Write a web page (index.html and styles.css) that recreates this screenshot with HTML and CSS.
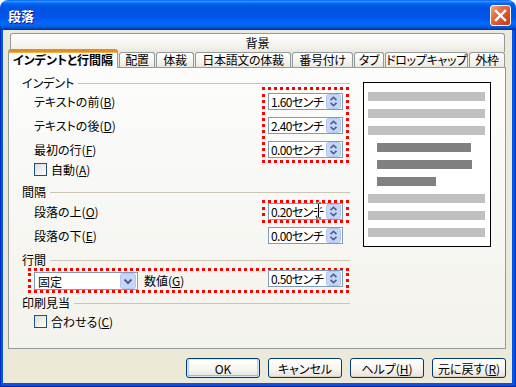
FILE: index.html
```html
<!DOCTYPE html>
<html lang="ja">
<head>
  <meta charset="UTF-8">
  <title>段落</title>
  <link rel="stylesheet" href="styles.css">
</head>
<body>

  <div class="window">
    <div class="titlebar">
      <span class="title">段落</span>
      <span class="close">
        <svg width="19" height="19" viewBox="0 0 19 19"><path d="M5 5 L14 14 M14 5 L5 14" stroke="#fff" stroke-width="2.4" stroke-linecap="square"/></svg>
      </span>
    </div>

    <div class="frame">
      <div class="client">
        <div class="tabs">
          <div class="tab-row back">
            <div class="tab">背景</div>
          </div>
          <div class="tab-row front">
            <div class="tab active">インデントと行間隔</div>
            <div class="tab">配置</div>
            <div class="tab">体裁</div>
            <div class="tab">日本語文の体裁</div>
            <div class="tab">番号付け</div>
            <div class="tab">タブ</div>
            <div class="tab">ドロップキャップ</div>
            <div class="tab">外枠</div>
          </div>
        </div>

        <div class="panel">
          <div class="form">
            <div class="group-title first"><span>インデント</span></div>
            <div class="indent">
              <div class="labels">
                <div class="label">テキストの前(<u>B</u>)</div>
                <div class="label">テキストの後(<u>D</u>)</div>
                <div class="label">最初の行(<u>F</u>)</div>
              </div>
              <div class="mark on stack">
                <div class="spin"><span class="value">1.60センチ</span><svg class="spin-btn" width="15" height="15" viewBox="0 0 15 15"><rect x="0.5" y="0.5" width="14" height="14" rx="2" fill="#C6D5FB" stroke="#B2C6F4"/><path d="M4.5 6.2 L7.5 3.4 L10.5 6.2 M4.5 8.8 L7.5 11.6 L10.5 8.8" fill="none" stroke="#4D6185" stroke-width="1.6"/></svg></div>
                <div class="spin"><span class="value">2.40センチ</span><svg class="spin-btn" width="15" height="15" viewBox="0 0 15 15"><rect x="0.5" y="0.5" width="14" height="14" rx="2" fill="#C6D5FB" stroke="#B2C6F4"/><path d="M4.5 6.2 L7.5 3.4 L10.5 6.2 M4.5 8.8 L7.5 11.6 L10.5 8.8" fill="none" stroke="#4D6185" stroke-width="1.6"/></svg></div>
                <div class="spin"><span class="value">0.00センチ</span><svg class="spin-btn" width="15" height="15" viewBox="0 0 15 15"><rect x="0.5" y="0.5" width="14" height="14" rx="2" fill="#C6D5FB" stroke="#B2C6F4"/><path d="M4.5 6.2 L7.5 3.4 L10.5 6.2 M4.5 8.8 L7.5 11.6 L10.5 8.8" fill="none" stroke="#4D6185" stroke-width="1.6"/></svg></div>
              </div>
            </div>
            <div class="check auto"><span class="box"></span><span>自動(<u>A</u>)</span></div>

            <div class="group-title spacing"><span>間隔</span></div>
            <div class="row above">
              <div class="label">段落の上(<u>O</u>)</div>
              <div class="mark on">
                <div class="spin"><span class="value">0.20センチ</span><svg class="spin-btn" width="15" height="15" viewBox="0 0 15 15"><rect x="0.5" y="0.5" width="14" height="14" rx="2" fill="#C6D5FB" stroke="#B2C6F4"/><path d="M4.5 6.2 L7.5 3.4 L10.5 6.2 M4.5 8.8 L7.5 11.6 L10.5 8.8" fill="none" stroke="#4D6185" stroke-width="1.6"/></svg>
                  <svg class="ibeam" width="7" height="17" viewBox="0 0 7 17"><path d="M0.5 0.5 H6.5 M0.5 16.5 H6.5 M3.5 0.5 V16.5" fill="none" stroke="#fff" stroke-width="2.5"/><path d="M1 1 H3 M4 1 H6 M1 16 H3 M4 16 H6 M3.5 1.5 V15.5" fill="none" stroke="#000" stroke-width="1"/></svg>
                </div>
              </div>
            </div>
            <div class="row below">
              <div class="label">段落の下(<u>E</u>)</div>
              <div class="mark">
                <div class="spin"><span class="value">0.00センチ</span><svg class="spin-btn" width="15" height="15" viewBox="0 0 15 15"><rect x="0.5" y="0.5" width="14" height="14" rx="2" fill="#C6D5FB" stroke="#B2C6F4"/><path d="M4.5 6.2 L7.5 3.4 L10.5 6.2 M4.5 8.8 L7.5 11.6 L10.5 8.8" fill="none" stroke="#4D6185" stroke-width="1.6"/></svg></div>
              </div>
            </div>

            <div class="group-title linespace"><span>行間</span></div>
            <div class="mark on wide">
              <div class="combo"><span class="value">固定</span><svg class="drop-btn" width="16" height="16" viewBox="0 0 16 16"><rect x="0.5" y="0.5" width="15" height="15" rx="2" fill="#C6D5FB" stroke="#B2C6F4"/><path d="M4.5 6.5 L8 10 L11.5 6.5" fill="none" stroke="#4D6185" stroke-width="2"/></svg></div>
              <div class="label inline">数値(<u>G</u>)</div>
              <div class="spin pushed"><span class="value">0.50センチ</span><svg class="spin-btn" width="15" height="15" viewBox="0 0 15 15"><rect x="0.5" y="0.5" width="14" height="14" rx="2" fill="#C6D5FB" stroke="#B2C6F4"/><path d="M4.5 6.2 L7.5 3.4 L10.5 6.2 M4.5 8.8 L7.5 11.6 L10.5 8.8" fill="none" stroke="#4D6185" stroke-width="1.6"/></svg></div>
            </div>

            <div class="group-title register"><span>印刷見当</span></div>
            <div class="check fit"><span class="box"></span><span>合わせる(<u>C</u>)</span></div>
          </div>

          <div class="preview">
            <div class="bar"></div>
            <div class="bar"></div>
            <div class="bar"></div>
            <div class="bar dark"></div>
            <div class="bar dark second"></div>
            <div class="bar dark short"></div>
            <div class="bar"></div>
            <div class="bar"></div>
            <div class="bar"></div>
          </div>
        </div>

        <div class="buttons">
          <button class="btn default">OK</button>
          <button class="btn">キャンセル</button>
          <button class="btn">ヘルプ(<u>H</u>)</button>
          <button class="btn">元に戻す(<u>R</u>)</button>
        </div>
      </div>
    </div>
  </div>

</body>
</html>
```

FILE: styles.css
```css
body {
  margin: 0;
  background: #fff;
  font-family: "Noto Sans CJK JP", "Noto Sans", sans-serif;
  font-size: 12px;
  font-feature-settings: "palt" 1;
  color: #000;
}
u {
  text-decoration-thickness: 1px;
  text-underline-offset: 1px;
}
.window {
  width: 516px;
  height: 387px;
  display: flex;
  flex-direction: column;
  border-radius: 8px 8px 0 0;
  overflow: hidden;
}
.titlebar {
  height: 30px;
  flex: none;
  display: flex;
  align-items: center;
  padding: 0 5px 0 8px;
  background: linear-gradient(to bottom, #0058EE 0%, #3593FF 4%, #288EFF 6%, #127DFF 8%, #036FFC 10%, #0262EE 14%, #0057E5 20%, #0054E3 24%, #0055EB 56%, #005BF5 66%, #026AFE 76%, #0062EF 86%, #0052D6 92%, #0040AB 96%, #003092 100%);
}
.title {
  flex: 1;
  color: #fff;
  font-weight: bold;
  font-size: 13px;
  text-shadow: 1px 1px #0F1A8C;
}
.close {
  width: 19px;
  height: 19px;
  border: 1px solid #fff;
  border-radius: 3px;
  background: linear-gradient(135deg, #F3A58A 0%, #E56E47 35%, #D64C21 70%, #C23C12 100%);
}
.close svg {
  display: block;
}
.frame {
  flex: 1;
  display: flex;
  padding: 0 4px 4px 3px;
  background: #0553E8;
  box-shadow: inset 1px 0 #0031B8, inset -1px 0 #0031B8, inset 0 -1px #00208F;
}
.client {
  flex: 1;
  display: flex;
  flex-direction: column;
  padding: 3px 6px 0 5px;
  background: #ECE9D8;
}

/* tabs */
.tab-row {
  display: flex;
}
.tab {
  box-sizing: border-box;
  border: 1px solid #919B9C;
  border-bottom: none;
  border-radius: 3px 3px 0 0;
  background: linear-gradient(#FFFFFF, #F3F2EC 70%, #EAE8DE);
  text-align: center;
  white-space: nowrap;
}
.back {
  height: 19px;
}
.back .tab {
  flex: 1;
  margin: 0 1px 0 2px;
  line-height: 17px;
}
.front {
  height: 15px;
  display: grid;
  grid-template-columns: 110px 37px 39px 97px 62px 31px 84px 37px;
}
.front .tab {
  margin-left: 1px;
  line-height: 14px;
  letter-spacing: -0.3px;
}
.front .tab.active {
  position: relative;
  z-index: 1;
  margin: -3px 0 -1px 0;
  height: 19px;
  border-top: 3px solid #FFC83C;
  box-shadow: inset 0 1px #F2B441;
  background: #FCFCFE;
  font-weight: bold;
  line-height: 15px;
  letter-spacing: 0;
  border-color: #E68B2C #919B9C #919B9C;
}

/* panel */
.panel {
  box-sizing: border-box;
  height: 282px;
  flex: none;
  display: flex;
  gap: 13px;
  padding: 8px 0 0 13px;
  border: 1px solid #919B9C;
  background: linear-gradient(#FCFCFB, #F3F2EC);
}
.form {
  width: 328px;
  display: flex;
  flex-direction: column;
}
.group-title {
  height: 14px;
  line-height: 14px;
  display: flex;
  align-items: center;
  gap: 4px;
}
.group-title::after {
  content: "";
  flex: 1;
  border-top: 1px solid #C9C6B6;
}
.group-title.first { margin-bottom: -3px; }
.group-title.spacing { margin-top: 9px; }
.group-title.linespace { margin-top: 6px; }
.group-title.register { margin-top: 3px; }

.indent {
  display: flex;
}
.labels {
  padding: 6px 0 0 12px;
  display: flex;
  flex-direction: column;
  gap: 7px;
}
.label {
  height: 17px;
  line-height: 17px;
  white-space: nowrap;
}
.mark {
  margin-left: auto;
  margin-right: 1px;
  padding: 0 3px;
  border: 3px dotted transparent;
}
.mark.on {
  border-color: #FF0000;
}
.mark.stack {
  padding: 3px 3px 2px;
  display: flex;
  flex-direction: column;
  gap: 7px;
}
.row {
  display: flex;
  align-items: center;
  padding-left: 12px;
}
.row.above { margin-top: 1px; }
.row.below { margin-top: 1px; }
.mark.wide {
  width: 309px;
  margin-left: 6px;
  margin-top: 1px;
  padding: 1px 3px 0;
  display: flex;
  align-items: flex-start;
}

.spin {
  position: relative;
  box-sizing: border-box;
  width: 75px;
  height: 17px;
  display: flex;
  align-items: center;
  border: 1px solid #7F9DB9;
  background: #fff;
}
.spin .value {
  flex: 1;
  min-width: 0;
  padding-left: 2px;
  line-height: 15px;
  white-space: nowrap;
  overflow: hidden;
  letter-spacing: -0.6px;
}
.spin-btn {
  display: block;
  flex: none;
  margin-right: 1px;
}
.ibeam {
  position: absolute;
  left: 46px;
  top: -2px;
}
.combo {
  box-sizing: border-box;
  width: 104px;
  height: 18px;
  display: flex;
  align-items: center;
  border: 1px solid #7F9DB9;
  background: #fff;
}
.combo .value {
  flex: 1;
  padding-left: 3px;
}
.drop-btn {
  display: block;
  margin-right: 1px;
}
.label.inline {
  margin-left: 6px;
  height: 18px;
  line-height: 18px;
}
.spin.pushed {
  margin-left: auto;
  margin-top: -2px;
}

.check {
  height: 14px;
  display: flex;
  align-items: center;
  gap: 4px;
  padding-left: 12px;
  white-space: nowrap;
}
.check.auto { margin-top: -1px; }
.check.fit { margin-top: 4px; }
.box {
  box-sizing: border-box;
  width: 13px;
  height: 13px;
  border: 1px solid #1C5180;
  background: linear-gradient(135deg, #DCDCD7, #FFFFFF);
}

/* preview */
.preview {
  box-sizing: border-box;
  width: 128px;
  height: 165px;
  margin-top: 6px;
  padding: 9px 5px 0 4px;
  border: 1px solid #000;
  background: #fff;
  display: flex;
  flex-direction: column;
  gap: 8px;
}
.bar {
  height: 9px;
  background: #C0C0C0;
}
.bar.dark {
  width: 94px;
  margin-left: 9px;
  background: #808080;
}
.bar.dark.second { width: 95px; }
.bar.dark.short { width: 59px; }

/* buttons */
.buttons {
  display: flex;
  justify-content: flex-end;
  gap: 8px;
  margin-top: 9px;
}
.btn {
  width: 74px;
  height: 20px;
  padding: 0;
  font: inherit;
  color: #000;
  border: 1px solid #003C74;
  border-radius: 3px;
  background: linear-gradient(#FFFFFF, #F6F5F0 55%, #E6E3D8);
  box-shadow: inset 0 -1px #D8D2C6;
}
.btn.default {
  box-shadow: inset 0 0 0 1px #CEE7FF, inset 0 -2px #98B8EA, inset 2px 0 #BCD4F6, inset -2px 0 #BCD4F6;
}
```
